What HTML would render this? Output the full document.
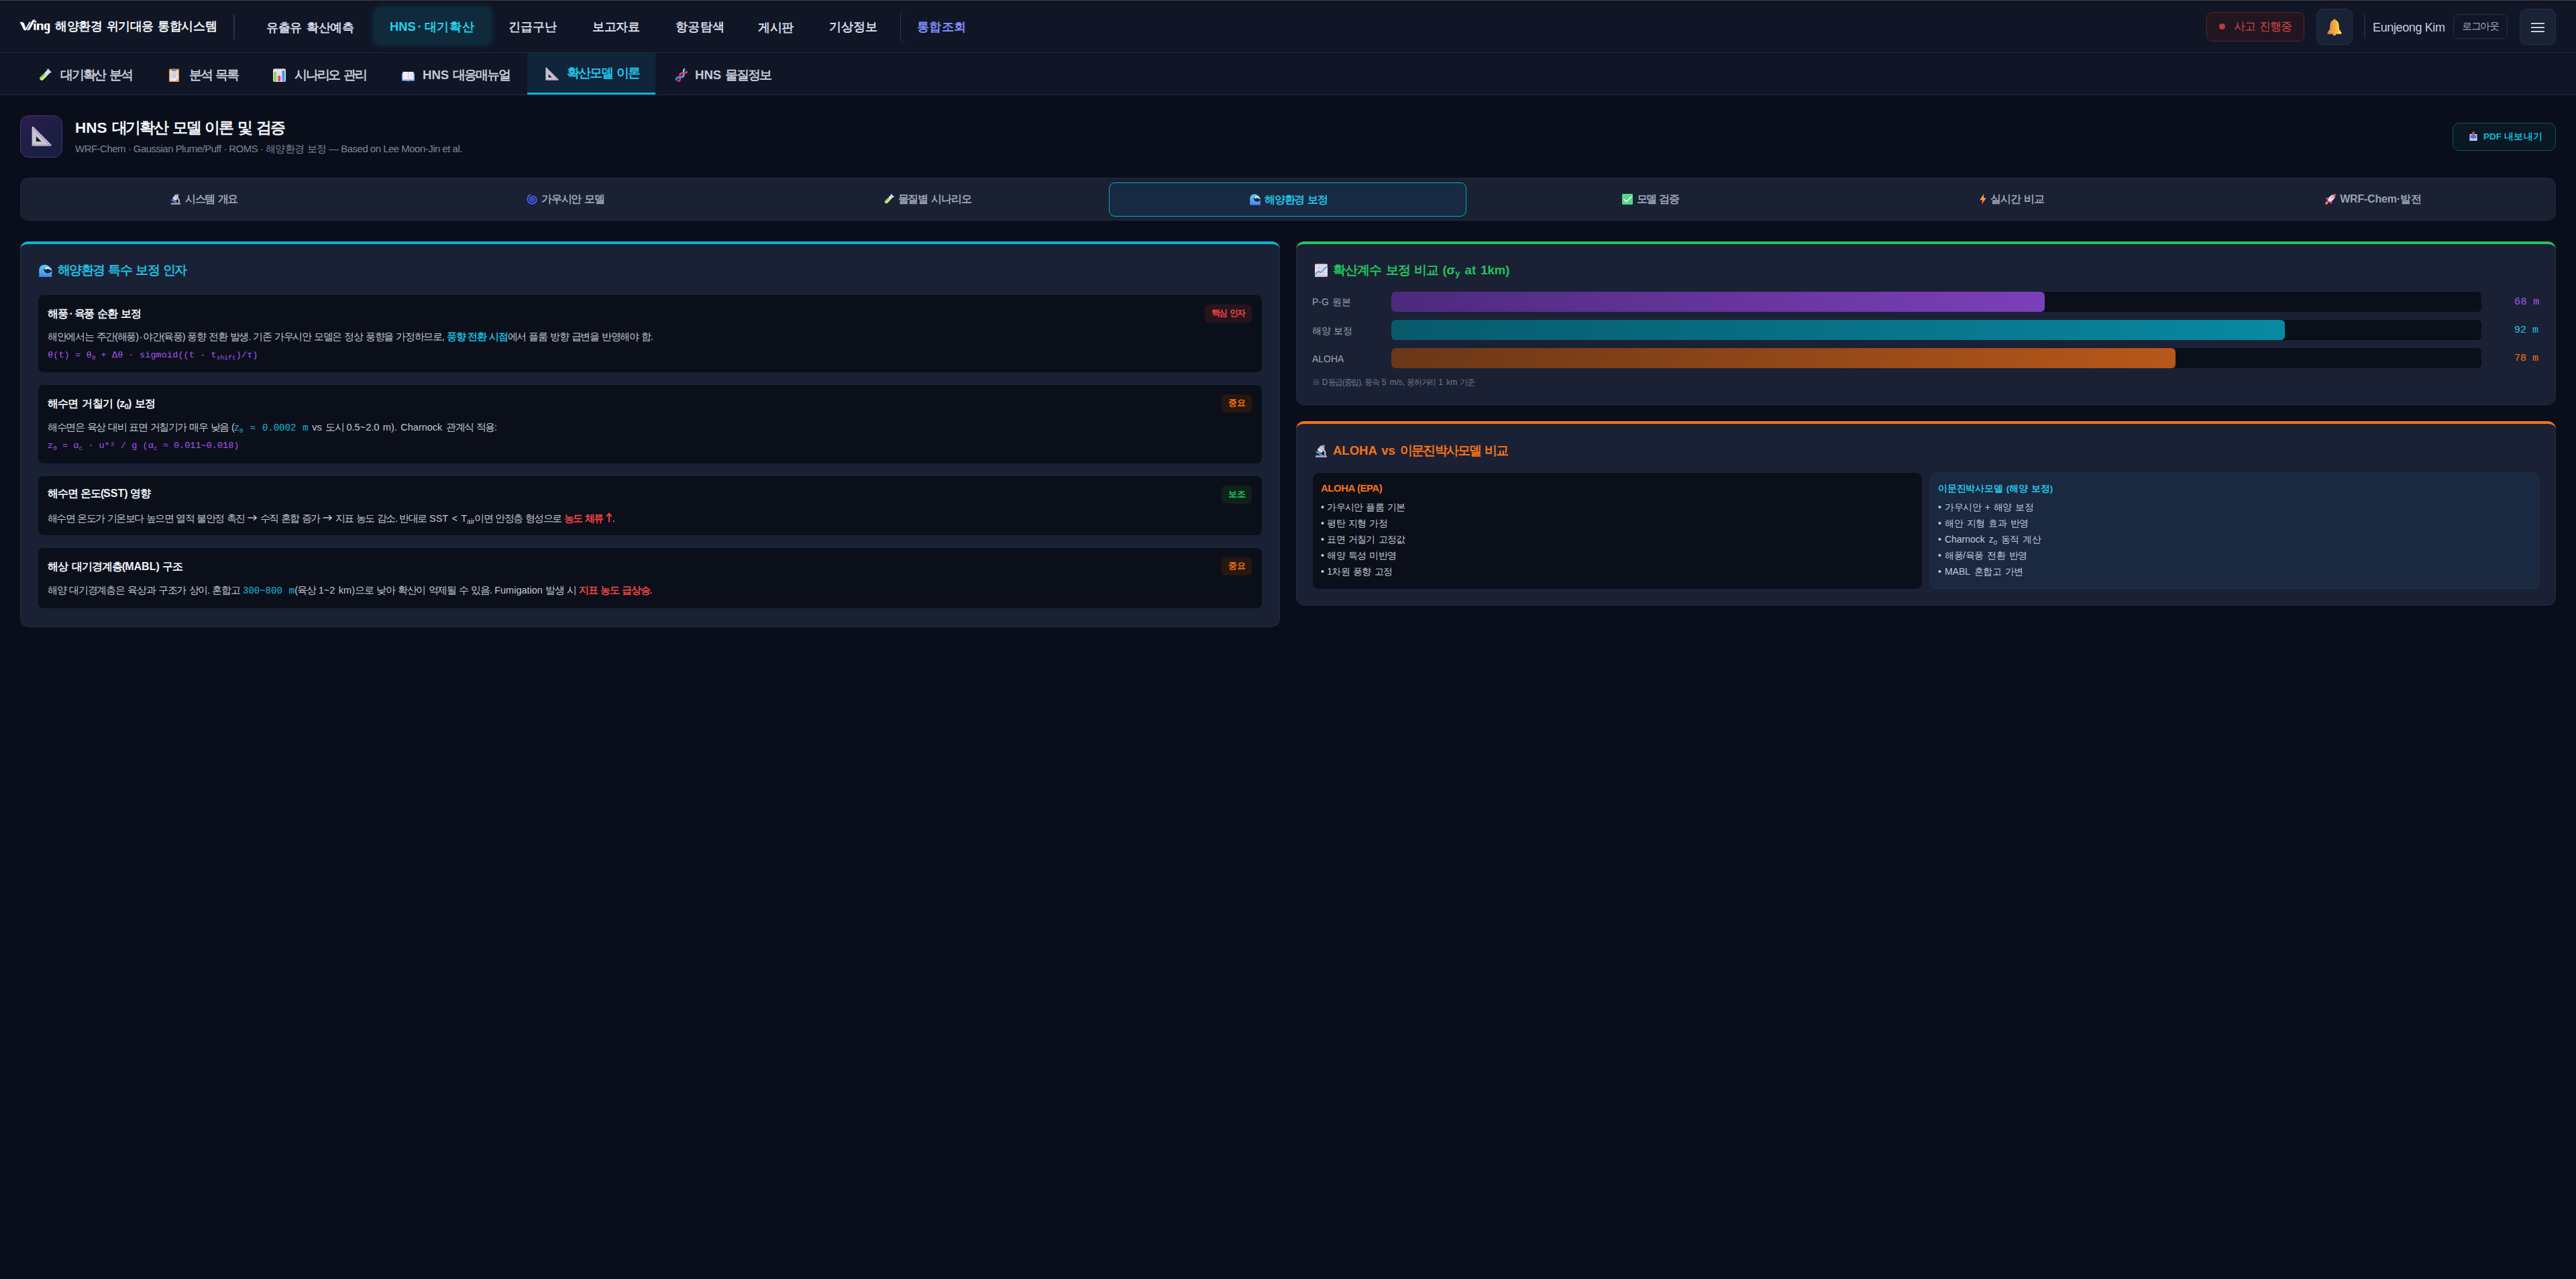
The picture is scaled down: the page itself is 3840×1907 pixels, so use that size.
<!DOCTYPE html>
<html lang="ko">
<head>
<meta charset="utf-8">
<style>
*{box-sizing:border-box;margin:0;padding:0}
html,body{width:3840px;height:1907px;overflow:hidden;background:#0a0e1a;font-family:"Liberation Sans",sans-serif;color:#c9d1e0}
.l{letter-spacing:0}
.dt{display:inline-block;margin:0 3px}
/* top nav */
#topline{position:absolute;left:0;top:0;width:3840px;height:1px;background:#42413d}
#nav{position:absolute;left:0;top:1px;width:3840px;height:78px;background:#101626;border-top:1px solid #0d1222;border-bottom:1px solid #1e2a44}
#sys{position:absolute;left:82px;top:25px;font-size:18px;font-weight:bold;color:#f2f4f8;line-height:24px;letter-spacing:-.5px;word-spacing:2px;white-space:nowrap}
#sep1{position:absolute;left:348px;top:20px;width:2px;height:37px;background:#27324d}
.ni{position:absolute;top:9px;height:55px;font-size:18.3px;font-weight:bold;color:#d3d9e6;white-space:nowrap}
.ni span{position:absolute;top:19px;line-height:24px;letter-spacing:-.3px;word-spacing:2px}
.ni.act{background:#0f2a3b;border-radius:10px;color:#22d3ee;box-shadow:0 0 8px 2px rgba(14,70,95,.45)}
.ni.int{color:#818cf8}
#intbox{position:absolute;left:1342px;top:11px;width:40px;height:53px;border-left:1.5px solid #2b3160;border-radius:9px 0 0 9px}
#inc{position:absolute;left:3289px;top:16px;width:146px;height:44px;border:1.5px solid #5a2431;background:#21161f;border-radius:9px}
#inc .dot{position:absolute;left:18px;top:16px;width:9px;height:9px;border-radius:50%;background:#b93a3f}
#inct{position:absolute;left:40px;top:9px;font-size:17px;color:#d9474d;line-height:24px;letter-spacing:-.9px;word-spacing:2px;white-space:nowrap}
.ibtn{position:absolute;top:11px;width:54px;height:54px;background:#1a2236;border:1.5px solid #243049;border-radius:10px}
#bell{left:3453px}
#sep2{position:absolute;left:3524px;top:19px;width:2px;height:36px;background:#1f2a42}
#uname{position:absolute;left:3537px;top:27px;font-size:18px;color:#c8d0e0;line-height:24px;white-space:nowrap;letter-spacing:-.3px}
#logout{position:absolute;left:3657px;top:19px;width:81px;height:37px;border:1.5px solid #243049;border-radius:8px}
#logoutt{position:absolute;left:12px;top:5px;font-size:15px;color:#a5aec0;line-height:24px;letter-spacing:-1.4px;white-space:nowrap}
#menu{left:3756px}
#menu i{position:absolute;left:16px;width:20px;height:2px;background:#c8d0e0}
/* sub nav */
#sub{position:absolute;left:0;top:79px;width:3840px;height:63px;background:#111626;border-bottom:1px solid #1e2a44}
.si{position:absolute;top:0;height:62px;font-size:18.6px;font-weight:bold;color:#c4cad8;white-space:nowrap}
.si .em{position:absolute;line-height:0}
.ic{display:block}
.si .tx{position:absolute;top:20px;line-height:24px;letter-spacing:-1.2px;word-spacing:3px}
.si.act{background:#10243a;border-bottom:3px solid #06b6d4;color:#22c4e6}
/* header */
#pgicon{position:absolute;left:30px;top:172px;width:63px;height:63px;border-radius:13px;border:1.5px solid #4a2f86;background:linear-gradient(135deg,#2c1c4c 0%,#1c1f44 55%,#13203f 100%);text-align:center;font-size:26px;line-height:61px}
#pgtitle{position:absolute;left:112px;top:176px;font-size:22.5px;font-weight:bold;color:#f3f5fa;line-height:30px;letter-spacing:-1.6px;word-spacing:3px;white-space:nowrap}
#pgsub{position:absolute;left:112px;top:212px;font-size:15px;color:#7c879f;line-height:20px;white-space:nowrap;letter-spacing:-.5px}
#pdf{position:absolute;left:3656px;top:183px;width:154px;height:42px;border:1.5px solid #0d5566;background:#0a1824;border-radius:10px;color:#13b8dc;font-size:13.5px;font-weight:bold;line-height:39px;white-space:nowrap}
#pdf .em{position:absolute;left:0;top:0}
#pdft{position:absolute;left:45px;top:0;letter-spacing:-.8px}
/* tabs */
#tabs{position:absolute;left:30px;top:265px;width:3780px;height:64px;background:#1a2133;border:1px solid #1f2940;border-radius:12px}
.tb{position:absolute;top:6px;width:533px;height:51px;border-radius:9px;padding-left:3px;font-size:16px;font-weight:bold;color:#9aa3b6;line-height:49px;text-align:center;white-space:nowrap;letter-spacing:-.6px;word-spacing:2px}
.tb .em{display:inline-block;vertical-align:-3px;margin-right:6px;letter-spacing:0;line-height:0}
.tb.act{background:#172a42;border:1.5px solid #0ea5c9;color:#22c3e6}
/* cards */
.card{position:absolute;background:#1b2134;border:1px solid #222b41;border-radius:12px}
.card .bar{position:absolute;left:-1px;right:-1px;top:-1px;height:16px;border-top:4.5px solid;border-radius:12px 12px 0 0}
.ctitle{position:absolute;font-size:18.5px;font-weight:bold;line-height:24px;white-space:nowrap;letter-spacing:-1px;word-spacing:2px}
.ctitle .l{letter-spacing:0}
.ctitle .em{display:inline-block;margin-right:8px;letter-spacing:0;vertical-align:-4px;line-height:0}
.item{position:absolute;left:25px;width:1826px;background:#0b0f1a;border:1px solid #0c2833;border-radius:9px}
.item .h{position:absolute;left:14px;font-size:16px;font-weight:bold;color:#f1f3f8;line-height:22px;white-space:nowrap;letter-spacing:-1.1px;word-spacing:2px}
.item .h .l{letter-spacing:0}
.item .d{position:absolute;left:14px;font-size:14.5px;color:#c3cad8;line-height:22px;white-space:nowrap;letter-spacing:-.9px;word-spacing:1.5px}
.item .d .l{letter-spacing:0}
.item .f{position:absolute;left:14px;font-family:"Liberation Mono",monospace;font-size:13.5px;color:#a855f7;line-height:20px;white-space:nowrap}
.item .bd{position:absolute;right:15px;top:14px;height:27px;padding:0 10px;border-radius:6px;font-size:13px;font-weight:bold;line-height:25px;letter-spacing:-.6px;word-spacing:2px}
.arw{display:inline-block;vertical-align:1px}
.ar{font-family:"Liberation Sans",sans-serif;font-weight:bold;font-size:1.15em;letter-spacing:0;line-height:0}
.mono{font-family:"Liberation Mono",monospace;letter-spacing:0}
.cy{color:#16b9dc;font-weight:bold}
.rd{color:#ef4444;font-weight:bold}
sub{font-size:70%;vertical-align:-3px;line-height:0}
.lbl{position:absolute;left:23px;font-size:14px;color:#9ca5b8;line-height:20px;white-space:nowrap;letter-spacing:-.5px;word-spacing:2px}
.track{position:absolute;left:141px;width:1625px;height:30px;background:#0b0f1a;border-radius:6px;overflow:hidden}
.fill{position:absolute;left:0;top:0;bottom:0;border-radius:6px}
.val{position:absolute;left:1815px;font-family:"Liberation Mono",monospace;font-size:15px;line-height:20px;white-space:nowrap}
.cmp{position:absolute;top:76px;height:173px;border-radius:9px}
.cmp .h{position:absolute;left:12px;top:13px;font-size:15px;font-weight:bold;line-height:20px;white-space:nowrap;letter-spacing:-.5px}
.cmp ul{position:absolute;left:12px;top:40px;list-style:none;font-size:14px;color:#c3cad8;line-height:24px;white-space:nowrap;letter-spacing:-.6px;word-spacing:2px}

/*CAL*/
#sys{letter-spacing:-0.46px!important;margin-top:0px}
#n1{letter-spacing:-0.30px!important;margin-top:-1px}
#n2{letter-spacing:0.83px!important;margin-top:-2px}
#n3{letter-spacing:0.09px!important;margin-top:-2px}
#n4{letter-spacing:-0.30px!important;margin-top:-2px}
#n5{letter-spacing:0.30px!important;margin-top:-2px}
#n6{letter-spacing:-0.30px!important;margin-top:-1px}
#n7{letter-spacing:0.00px!important;margin-top:-2px}
#n8{letter-spacing:0.30px!important;margin-top:-2px}
#inct{letter-spacing:-0.90px!important;margin-top:0px}
#uname{letter-spacing:-0.38px!important;margin-top:0px}
#logoutt{letter-spacing:-1.40px!important;margin-top:0px}
#s1{letter-spacing:-2.22px!important;margin-top:1px}
#s2{letter-spacing:-2.33px!important;margin-top:1px}
#s3{letter-spacing:-2.19px!important;margin-top:1px}
#s4{letter-spacing:-2.10px!important;margin-top:1px}
#s5{letter-spacing:-1.95px!important;margin-top:0px}
#s6{letter-spacing:-1.99px!important;margin-top:1px}
#pgtitle{letter-spacing:-2.20px!important;margin-top:0px}
#pgsub{letter-spacing:-0.52px!important;margin-top:0px}
#pdft{letter-spacing:0.32px!important;margin-top:0px}
#i1h{letter-spacing:-1.23px!important;margin-top:0px}
#i3h{letter-spacing:-1.25px!important;margin-top:-1px}
#i4h{letter-spacing:-0.95px!important;margin-top:1px}
#lb1{letter-spacing:-0.50px!important;margin-top:-1px}
#v1{letter-spacing:0.45px!important;margin-top:0px}
#fn{letter-spacing:-1.26px!important;margin-top:0px}
#ah{letter-spacing:-0.50px!important;margin-top:0px}
#al{letter-spacing:-0.76px!important;margin-top:-1px}
#bh{letter-spacing:-0.24px!important;margin-top:0px}
#t6 .l{letter-spacing:-.2px}
#t6{letter-spacing:0px!important}
#t0{letter-spacing:-1.52px!important;margin-top:0px}
#t1{letter-spacing:-1.16px!important;margin-top:0px}
#t2{letter-spacing:-1.22px!important;margin-top:0px}
#t4{letter-spacing:-1.59px!important;margin-top:0px}
#t5{letter-spacing:-0.92px!important;margin-top:0px}
#ct1{letter-spacing:-1.47px!important;margin-top:1px}
#ct2{letter-spacing:-0.91px!important;margin-top:1px}
#ct3{letter-spacing:-1.80px!important;margin-top:0px}
#i1d{letter-spacing:-1.29px!important;margin-top:-1px}
#i3d{letter-spacing:-1.51px!important;margin-top:1px}
#i4d{letter-spacing:-1.20px!important;margin-top:0px}
#t3{letter-spacing:-1.3px!important}
#i1f{letter-spacing:0.10px!important;margin-top:0px}
#i2h{letter-spacing:-0.78px!important;margin-top:0px}
#i2d{letter-spacing:-1.39px!important;margin-top:0px}
#i2f{letter-spacing:0.03px!important;margin-top:0px}
#bl{letter-spacing:-0.43px!important;margin-top:-2px}
/*ENDCAL*/
</style>
</head>
<body>
<svg width="0" height="0" style="position:absolute;left:0;top:0"><defs>
<linearGradient id="gBell" x1="0" y1="0" x2="1" y2="0"><stop offset="0" stop-color="#e0803e"/><stop offset=".45" stop-color="#f0a43a"/><stop offset="1" stop-color="#ffe85e"/></linearGradient>
<linearGradient id="gLiq" x1="0" y1="0" x2="1" y2="0"><stop offset="0" stop-color="#86d43a"/><stop offset="1" stop-color="#ecf78e"/></linearGradient>
<linearGradient id="gWave" x1="0" y1="0" x2="0" y2="1"><stop offset="0" stop-color="#5ccaf8"/><stop offset="1" stop-color="#3f86f0"/></linearGradient>
<linearGradient id="gBolt" x1="0" y1="0" x2="0" y2="1"><stop offset="0" stop-color="#ffc04a"/><stop offset=".6" stop-color="#ff8a48"/><stop offset="1" stop-color="#ff4f58"/></linearGradient>
<linearGradient id="gIcon" x1="0" y1="0" x2="1" y2="1"><stop offset="0" stop-color="#2d1a4d"/><stop offset=".55" stop-color="#1e1f46"/><stop offset="1" stop-color="#13213f"/></linearGradient>
<linearGradient id="gDnaB" x1="0" y1="1" x2="1" y2="0"><stop offset="0" stop-color="#3a8cf6"/><stop offset="1" stop-color="#62e6fa"/></linearGradient>
</defs></svg>
<div id="topline"></div>
<div id="nav">
  <svg width="50" height="28" viewBox="0 0 50 28" style="position:absolute;left:26px;top:22px"><g fill="#fff">
<path d="M3.6 8.9Q7.4 8 9.8 10.2L12.6 18.8 10.6 21.2Q9.8 21.2 9.4 20.2Z"/>
<path d="M10.6 21.2L12.8 21.2 19.9 8.8 17.9 8.5Z"/>
<path d="M13.9 21.2Q17.2 21.3 18.8 19.6L26.4 5.6Q24.2 4.6 22.3 6.3Z"/>
<path d="M24.4 11H27.6V20.8H24.4Z"/><circle cx="26.8" cy="8.3" r="1.5"/>
<path d="M29.1 11H32.3V12.3Q33.4 11 35.6 11Q38.7 11.2 38.7 14.2V20.8H35.5V14.5Q35.5 12.8 34.2 12.8Q32.8 12.9 32.3 13.8V20.8H29.1Z"/>
<path fill-rule="evenodd" d="M39.9 14.2Q39.9 11 43 11H48.3V22.4Q48.3 26.2 44.6 26.2Q41.6 26.2 40.4 24.2L43.4 23.2Q43.9 24.5 44.9 24.4Q45.2 24.3 45.2 23.2V20.6H43Q39.9 20.6 39.9 17.6ZM43.2 12.6V19H45.2V12.6Z"/>
</g></svg>
  <div id="sys">해양환경 위기대응 통합시스템</div>
  <div id="sep1"></div>
  <div class="ni" style="left:371px;width:185px"><span id="n1" style="left:26px">유출유 확산예측</span></div>
  <div class="ni act" style="left:557px;width:175px"><span id="n2" style="left:24px"><b class="l">HNS</b><b class="dt">·</b>대기확산</span></div>
  <div class="ni" style="left:732px;width:125px"><span id="n3" style="left:26px">긴급구난</span></div>
  <div class="ni" style="left:857px;width:124px"><span id="n4" style="left:26px">보고자료</span></div>
  <div class="ni" style="left:981px;width:124px"><span id="n5" style="left:26px">항공탐색</span></div>
  <div class="ni" style="left:1105px;width:104px"><span id="n6" style="left:25px">게시판</span></div>
  <div class="ni" style="left:1209px;width:125px"><span id="n7" style="left:27px">기상정보</span></div>
  <div id="intbox"></div>
  <div class="ni int" style="left:1342px;width:122px"><span id="n8" style="left:25px">통합조회</span></div>

  <div id="inc"><div class="dot"></div><div id="inct">사고 진행중</div></div>
  <div class="ibtn" id="bell"><svg class="ic" width="22" height="25" viewBox="0 0 22 25" style="position:absolute;left:14.5px;top:13.5px"><circle cx="11" cy="1.6" r="1.4" fill="#f1a23e"/>
<path d="M11 1.8C7.2 1.8 4.7 4.8 4.4 9.2L4 15.6 0.6 20.6C0.1 21.5 0.6 22.7 1.8 22.7H20.2C21.4 22.7 21.9 21.5 21.4 20.6L18 15.6 17.6 9.2C17.3 4.8 14.8 1.8 11 1.8Z" fill="url(#gBell)"/>
<path d="M2.2 18.6H19.8" stroke="#f6b840" stroke-width="1" opacity=".6"/>
<ellipse cx="11" cy="23.4" rx="2.4" ry="1.5" fill="#f5a070"/></svg></div>
  <div id="sep2"></div>
  <div id="uname">Eunjeong Kim</div>
  <div id="logout"><div id="logoutt">로그아웃</div></div>
  <div class="ibtn" id="menu"><i style="top:20px"></i><i style="top:26px"></i><i style="top:32px"></i></div>
</div>

<div id="sub">
  <div class="si" style="left:30px;width:194px"><span class="em" style="left:27.4px;top:23.4px"><svg class="ic" width="20" height="20" viewBox="0 0 20 20"><g transform="scale(1.0)"><g transform="translate(10 10) scale(.86) rotate(45) translate(-10 -9)">
<rect x="6.6" y="-2.2" width="6.8" height="22.5" rx="3.4" fill="#c6e8fa"/>
<path d="M6.6 7.2H13.4V16.9A3.4 3.4 0 0 1 6.6 16.9Z" fill="url(#gLiq)"/>
<path d="M5.2 -2.8H14.8L13.4 0.6H6.6Z" fill="#b5def7"/>
<path d="M6.6 8.2h2.2M6.6 11.4h2.2M6.6 14.6h2.2" stroke="#1c8a90" stroke-width="1.1"/>
</g></g></svg></span><span class="tx" id="s1" style="left:60px">대기확산 분석</span></div>
  <div class="si" style="left:224px;width:158px"><span class="em" style="left:27.8px;top:23px"><svg class="ic" width="15" height="20" viewBox="0 0 15 20"><rect x="0" y="0.8" width="15" height="19.2" rx="1" fill="#e6a25e"/>
<path d="M1.6 3.2H13.4V15.6L10.8 18.4H1.6Z" fill="#ebe7f1"/>
<path d="M13.4 15.6L10.8 18.4V15.6Z" fill="#cfc9d8"/>
<rect x="4.2" y="1.2" width="6.6" height="3" rx="0.8" fill="#8d8896"/>
<rect x="6.3" y="0" width="2.4" height="1.6" rx="0.8" fill="#8d8896"/>
<path d="M3.6 6.8H11.4M3.6 9H11.4M3.6 11.2H11.4M3.6 13.4H10" stroke="#aeaab6" stroke-width="0.9"/></svg></span><span class="tx" id="s2" style="left:58px">분석 목록</span></div>
  <div class="si" style="left:382px;width:191px"><span class="em" style="left:25px;top:22.8px"><svg class="ic" width="19" height="20" viewBox="0 0 19 20"><rect x="0" y="0.5" width="19" height="19.5" rx="2.2" fill="#e6e2ec"/>
<path d="M0.5 7.5H18.5M0.5 13.5H18.5M6.3 0.5V19.5M12.7 0.5V19.5" stroke="#d2cdda" stroke-width="0.8"/>
<rect x="1.2" y="5.3" width="3.8" height="14" rx="1" fill="#8ad64e"/>
<rect x="7.4" y="10.6" width="3.8" height="8.7" rx="1.6" fill="#ee3a74"/>
<rect x="13.6" y="3.2" width="3.8" height="16.1" rx="1" fill="#3a96f2"/></svg></span><span class="tx" id="s3" style="left:57px">시나리오 관리</span></div>
  <div class="si" style="left:573px;width:213px"><span class="em" style="left:26px;top:27.8px"><svg class="ic" width="19" height="15" viewBox="0 0 19 15"><path d="M0 2.2H19V14H10.6L9.5 15.2 8.4 14H0Z" fill="#4ab6f6"/>
<path d="M0 12.6H19V14H10.6L9.5 15.2 8.4 14H0Z" fill="#3a62d0"/>
<path d="M1.4 0.6C1.4 0.3 1.6 0 2 0H9.3V13.2L8.3 12.4H1.4Z" fill="#f0ebf7"/>
<path d="M17.6 0.6C17.6 0.3 17.4 0 17 0H9.7V13.2L10.7 12.4H17.6Z" fill="#ece6f4"/>
<path d="M1.4 11H9.3V13.2L8.3 12.4H1.4Z M17.6 11H9.7V13.2L10.7 12.4H17.6Z" fill="#c9b8dc"/>
<path d="M9.5 0.4V13.4" stroke="#cdc5dc" stroke-width="0.8"/></svg></span><span class="tx" id="s4" style="left:57px"><b class="l">HNS</b> 대응매뉴얼</span></div>
  <div class="si act" style="left:786px;width:191px"><span class="em" style="left:27px;top:20.8px"><svg class="ic" width="20" height="20" viewBox="0 0 20 20"><g transform="scale(1.0)">
<path d="M1.6 0.4L19.4 18.2Q20 19.6 18.6 19.6H1.4Q0.4 19.6 0.4 18.6V1.4Q0.6 0 1.6 0.4Z" fill="#c9c5cf"/>
<path d="M0.4 18H19.2L19.6 19.2Q19.6 19.6 18.6 19.6H1.4Q0.4 19.6 0.4 18.6Z" fill="#b9aec8"/>
<path d="M4.6 10.2V15.4H9.8Z" fill="#0f1e33"/>
<circle cx="2.60" cy="3.40" r="0.75" fill="#a86ff5"/><circle cx="4.45" cy="5.25" r="0.75" fill="#a86ff5"/><circle cx="6.30" cy="7.10" r="0.75" fill="#a86ff5"/><circle cx="8.15" cy="8.95" r="0.75" fill="#a86ff5"/><circle cx="10.00" cy="10.80" r="0.75" fill="#a86ff5"/><circle cx="11.85" cy="12.65" r="0.75" fill="#a86ff5"/><circle cx="13.70" cy="14.50" r="0.75" fill="#a86ff5"/><circle cx="15.55" cy="16.35" r="0.75" fill="#a86ff5"/><circle cx="17.40" cy="18.20" r="0.75" fill="#a86ff5"/></g></svg></span><span class="tx" id="s5" style="left:59px;top:18px">확산모델 이론</span></div>
  <div class="si" style="left:977px;width:200px"><span class="em" style="left:28px;top:23px"><svg class="ic" width="20" height="20" viewBox="0 0 20 20"><path d="M6.86 19.03 L3.00 15.68 M8.29 18.05 L3.77 14.13 M8.86 16.32 L5.41 13.32 M8.77 14.02 L7.70 13.09 M8.47 11.54 L10.20 13.04 M8.50 9.35 L12.36 12.70 M9.27 7.79 L13.79 11.72 M10.91 6.99 L14.36 9.99 M13.20 6.76 L14.27 7.69 M15.70 6.70 L13.97 5.21 M17.86 6.36 L14.00 3.01 M19.29 5.38 L14.77 1.46 " stroke="#8a5aa8" stroke-width="0.8"/>
<path d="M2.92 17.09 L2.93 16.35 L3.00 15.68 L3.17 15.08 L3.42 14.56 L3.77 14.13 L4.23 13.78 L4.77 13.51 L5.41 13.32 L6.12 13.20 L6.89 13.13 L7.70 13.09 L8.54 13.08 L9.37 13.07 L10.20 13.04 L10.98 12.98 L11.71 12.87 L12.36 12.70 L12.93 12.45 L13.41 12.13 L13.79 11.72 L14.07 11.22 L14.26 10.64 L14.36 9.99 L14.38 9.27 L14.35 8.50 L14.27 7.69 L14.16 6.86 L14.06 6.02 L13.97 5.21 L13.92 4.42 L13.93 3.69 L14.00 3.01 L14.17 2.41 L14.42 1.89 L14.77 1.46 L15.23 1.11" stroke="url(#gDnaB)" stroke-width="2.2" fill="none" stroke-linecap="round" stroke-linejoin="round"/>
<path d="M5.48 19.31 L6.21 19.20 L6.86 19.03 L7.43 18.79 L7.91 18.46 L8.29 18.05 L8.57 17.55 L8.76 16.98 L8.86 16.32 L8.88 15.60 L8.85 14.83 L8.77 14.02 L8.66 13.19 L8.56 12.36 L8.47 11.54 L8.42 10.76 L8.43 10.02 L8.50 9.35 L8.67 8.75 L8.92 8.23 L9.27 7.79 L9.73 7.45 L10.27 7.18 L10.91 6.99 L11.62 6.87 L12.39 6.79 L13.20 6.76 L14.04 6.74 L14.87 6.73 L15.70 6.70 L16.48 6.64 L17.21 6.54 L17.86 6.36 L18.43 6.12 L18.91 5.79 L19.29 5.38 L19.57 4.89" stroke="#f03a70" stroke-width="2.2" fill="none" stroke-linecap="round" stroke-linejoin="round"/></svg></span><span class="tx" id="s6" style="left:59px"><b class="l">HNS</b> 물질정보</span></div>
</div>

<div id="pgicon"><svg class="ic" width="30" height="30" viewBox="0 0 30 30" style="position:absolute;left:15.5px;top:14.5px"><g transform="scale(1.5)">
<path d="M1.6 0.4L19.4 18.2Q20 19.6 18.6 19.6H1.4Q0.4 19.6 0.4 18.6V1.4Q0.6 0 1.6 0.4Z" fill="#c9c5cf"/>
<path d="M0.4 18H19.2L19.6 19.2Q19.6 19.6 18.6 19.6H1.4Q0.4 19.6 0.4 18.6Z" fill="#b9aec8"/>
<path d="M4.6 10.2V15.4H9.8Z" fill="#0f1e33"/>
<circle cx="2.60" cy="3.40" r="0.75" fill="#a86ff5"/><circle cx="4.45" cy="5.25" r="0.75" fill="#a86ff5"/><circle cx="6.30" cy="7.10" r="0.75" fill="#a86ff5"/><circle cx="8.15" cy="8.95" r="0.75" fill="#a86ff5"/><circle cx="10.00" cy="10.80" r="0.75" fill="#a86ff5"/><circle cx="11.85" cy="12.65" r="0.75" fill="#a86ff5"/><circle cx="13.70" cy="14.50" r="0.75" fill="#a86ff5"/><circle cx="15.55" cy="16.35" r="0.75" fill="#a86ff5"/><circle cx="17.40" cy="18.20" r="0.75" fill="#a86ff5"/></g></svg></div>
<div id="pgtitle"><span class="l">HNS</span> 대기확산 모델 이론 및 검증</div>
<div id="pgsub">WRF-Chem · Gaussian Plume/Puff · ROMS · 해양환경 보정 — Based on Lee Moon-Jin et al.</div>
<div id="pdf"><span class="em"><svg class="ic" width="12" height="15" viewBox="0 0 12 15" style="position:absolute;left:24.3px;top:11.4px"><path d="M0.5 5H11.5V14.4Q11.5 15 10.9 15H1.1Q0.5 15 0.5 14.4Z" fill="#e8e2f0"/>
<path d="M1.6 6.2H10.4V11.2H7.4L6 12.8 4.6 11.2H1.6Z" fill="#2a86e0"/>
<path d="M0.5 12.6H11.5V14.4Q11.5 15 10.9 15H1.1Q0.5 15 0.5 14.4Z" fill="#c3b0dc"/>
<path d="M6 0.4L9.2 3.8H7.3V8H4.7V3.8H2.8Z" fill="#e8306a"/></svg></span><span id="pdft"><span class="l">PDF</span> 내보내기</span></div>

<div id="tabs">
  <div class="tb" id="t0" style="left:5px"><span class="em"><svg class="ic" width="16" height="16" viewBox="0 0 16 16"><rect x="0.8" y="13.4" width="14.4" height="2.6" rx="0.8" fill="#ad9bbd"/>
<path d="M9.6 6.4C12.8 7 14 10.2 12.4 13.2" stroke="#cdc3d8" stroke-width="1.9" fill="none"/>
<g transform="rotate(38 8 5.6)"><rect x="4.6" y="1.2" width="6.6" height="9" rx="3" fill="#c6c2cc"/><rect x="4.6" y="6.8" width="6.6" height="2" fill="#e8d6fa"/><rect x="6.2" y="-0.6" width="3.4" height="2.4" rx="0.6" fill="#8e8a98"/></g>
<path d="M2.2 9L8.8 13" stroke="#3ca6f2" stroke-width="2" stroke-linecap="round"/></svg></span>시스템 개요</div>
  <div class="tb" id="t1" style="left:544px"><span class="em"><svg class="ic" width="16" height="16" viewBox="0 0 16 16"><path d="M5 1.4C2.6 3 1.2 5.8 1.6 9 2.2 13 6 15.4 9.6 14.8 13 14.2 15 11.2 14.6 8.2 14.2 5.2 11.6 3.4 9 3.6 6.6 3.8 5 5.8 5.2 8.2 5.4 10.2 7 11.6 8.8 11.4 10.4 11.2 11.4 9.8 11.2 8.4 11 7.2 10 6.6 9 6.8 8.2 7 7.8 7.8 8 8.4" stroke="#4d5ffb" stroke-width="1.9" fill="none" stroke-linecap="round"/></svg></span>가우시안 모델</div>
  <div class="tb" id="t2" style="left:1083px"><span class="em"><svg class="ic" width="16" height="16" viewBox="0 0 16 16"><g transform="scale(0.8)"><g transform="translate(10 10) scale(.86) rotate(45) translate(-10 -9)">
<rect x="6.6" y="-2.2" width="6.8" height="22.5" rx="3.4" fill="#c6e8fa"/>
<path d="M6.6 7.2H13.4V16.9A3.4 3.4 0 0 1 6.6 16.9Z" fill="url(#gLiq)"/>
<path d="M5.2 -2.8H14.8L13.4 0.6H6.6Z" fill="#b5def7"/>
<path d="M6.6 8.2h2.2M6.6 11.4h2.2M6.6 14.6h2.2" stroke="#1c8a90" stroke-width="1.1"/>
</g></g></svg></span>물질별 시나리오</div>
  <div class="tb act" id="t3" style="left:1622px"><span class="em"><svg class="ic" width="16" height="17" viewBox="0 0 16 17"><g transform="scale(1.0 1.0)">
<path d="M0.2 17V7.6C0.2 3.4 3.2 0.6 7 0.6 9.8 0.6 12.2 2 13.4 3.6L15.8 6.8V17Z" fill="url(#gWave)"/>
<path d="M15.8 9.8C14.6 11.6 12.8 12.6 10.8 12.6 7.8 12.6 5.6 10.4 5.6 7.8 5.6 5.6 7.2 4.2 9 4.2 10.4 4.2 11.8 5 12.4 6 13.4 6.4 14.6 7.8 15.8 9Z" fill="#1a2a44"/>
<path d="M6.6 5.6C7.6 3.6 10.2 3.2 12 3.8L14.2 5 15.6 6.6 14.6 7.4 13.2 6.6 11.4 6.2 9 6.4 7.4 7Z" fill="#bfeefc"/>
<path d="M5.6 7.8C5.6 10.4 7.8 12.6 10.8 12.6 12.8 12.6 14.6 11.6 15.8 9.8" stroke="#6ad6fa" stroke-width="1" fill="none"/>
<path d="M0.2 16H15.8V17H0.2Z" fill="#3a6fd8"/></g></svg></span>해양환경 보정</div>
  <div class="tb" id="t4" style="left:2161px"><span class="em"><svg class="ic" width="16" height="16" viewBox="0 0 16 16"><rect x="0" y="0" width="16" height="16" rx="1.6" fill="#58d68b"/>
<path d="M3 8.4L6.5 11.6 13.8 4.6" stroke="#fdf3ff" stroke-width="1.6" fill="none" stroke-linecap="round" stroke-linejoin="round"/></svg></span>모델 검증</div>
  <div class="tb" id="t5" style="left:2700px"><span class="em"><svg class="ic" width="10" height="16" viewBox="0 0 10 16"><path d="M6.2 0.2L0.2 9.2H4L3.2 15.8 9.8 6.2H6Z" fill="url(#gBolt)"/></svg></span>실시간 비교</div>
  <div class="tb" id="t6" style="left:3239px"><span class="em"><svg class="ic" width="16" height="16" viewBox="0 0 16 16"><path d="M15.8 0.2C12.6 0.2 8.8 1.8 5.8 5.2L3.6 9.4 6.6 12.4 10.8 10.2C14.2 7.2 15.8 3.4 15.8 0.2Z" fill="#ecdcef"/>
<path d="M15.8 0.2C13.4 0.2 11.6 0.8 10.8 1.4L14.6 5.2C15.2 4.4 15.8 2.6 15.8 0.2Z" fill="#ef3458"/>
<circle cx="10.6" cy="5.4" r="1.7" fill="#5aaef8" stroke="#d7c8de" stroke-width="0.6"/>
<path d="M5.8 5.2L0.4 6.6 3.6 9.4Z M10.8 10.2L9.4 15.6 6.6 12.4Z" fill="#ee3a86"/>
<path d="M3.6 9.4L6.6 12.4 5 13.4 2.6 11Z" fill="#e8306a"/>
<path d="M2.6 11.2C1.2 11.4 0.2 13.2 0.2 15.8 2.8 15.8 4.6 14.8 4.8 13.4Z" fill="#f5952e"/></svg></span><span class="l">WRF-Chem·</span>발전</div>
</div>

<!-- left card -->
<div class="card" style="left:30px;top:360px;width:1878px;height:575px">
  <div class="bar" style="border-color:#06b6d4"></div>
  <div class="ctitle" id="ct1" style="left:27px;top:29px;color:#1fbfe0"><span class="em"><svg class="ic" width="19.5" height="19.5" viewBox="0 0 19.5 19.5"><g transform="scale(1.21875 1.1470588235294117)">
<path d="M0.2 17V7.6C0.2 3.4 3.2 0.6 7 0.6 9.8 0.6 12.2 2 13.4 3.6L15.8 6.8V17Z" fill="url(#gWave)"/>
<path d="M15.8 9.8C14.6 11.6 12.8 12.6 10.8 12.6 7.8 12.6 5.6 10.4 5.6 7.8 5.6 5.6 7.2 4.2 9 4.2 10.4 4.2 11.8 5 12.4 6 13.4 6.4 14.6 7.8 15.8 9Z" fill="#1a2a44"/>
<path d="M6.6 5.6C7.6 3.6 10.2 3.2 12 3.8L14.2 5 15.6 6.6 14.6 7.4 13.2 6.6 11.4 6.2 9 6.4 7.4 7Z" fill="#bfeefc"/>
<path d="M5.6 7.8C5.6 10.4 7.8 12.6 10.8 12.6 12.8 12.6 14.6 11.6 15.8 9.8" stroke="#6ad6fa" stroke-width="1" fill="none"/>
<path d="M0.2 16H15.8V17H0.2Z" fill="#3a6fd8"/></g></svg></span>해양환경 특수 보정 인자</div>

  <div class="item" style="top:78px;height:117px">
    <div class="h" id="i1h" style="top:17px">해풍<b class="dt">·</b>육풍 순환 보정</div>
    <div class="bd" style="color:#ef4444;background:#27141d;letter-spacing:-1.5px">핵심 인자</div>
    <div class="d" id="i1d" style="top:52px">해안에서는 주간(해풍)<b class="dt" style="font-weight:normal;margin:0 2px">·</b>야간(육풍) 풍향 전환 발생. 기존 가우시안 모델은 정상 풍향을 가정하므로, <span class="cy">풍향 전환 시점</span>에서 플룸 방향 급변을 반영해야 함.</div>
    <div class="f" id="i1f" style="top:80px">θ(t) = θ<sub>0</sub> + Δθ · sigmoid((t - t<sub>shift</sub>)/τ)</div>
  </div>

  <div class="item" style="top:212px;height:119px">
    <div class="h" id="i2h" style="top:17px">해수면 거칠기 (z<sub>0</sub>) 보정</div>
    <div class="bd" style="color:#f97316;background:#26170f">중요</div>
    <div class="d" id="i2d" style="top:52px">해수면은 육상 대비 표면 거칠기가 매우 낮음 (<span class="mono" style="color:#16b9dc;font-size:14px">z<sub>0</sub> ≈ 0.0002 m</span><span class="l"> vs </span>도시 <span class="l">0.5~2.0 m). Charnock </span>관계식 적용:</div>
    <div class="f" id="i2f" style="top:81px">z<sub>0</sub> = α<sub>c</sub> · u*² / g (α<sub>c</sub> ≈ 0.011~0.018)</div>
  </div>

  <div class="item" style="top:348px;height:90px">
    <div class="h" id="i3h" style="top:16px">해수면 온도(<span class="l">SST</span>) 영향</div>
    <div class="bd" style="color:#22c55e;background:#0f2219">보조</div>
    <div class="d" id="i3d" style="top:51px">해수면 온도가 기온보다 높으면 열적 불안정 촉진 <svg class="arw" width="15" height="10" viewBox="0 0 15 10"><path d="M0.5 5H13M9 1.2L13.2 5 9 8.8" stroke="currentColor" stroke-width="1.5" fill="none"/></svg> 수직 혼합 증가 <svg class="arw" width="15" height="10" viewBox="0 0 15 10"><path d="M0.5 5H13M9 1.2L13.2 5 9 8.8" stroke="currentColor" stroke-width="1.5" fill="none"/></svg> 지표 농도 감소. 반대로 <span class="l">SST &lt; T<sub>air</sub></span>이면 안정층 형성으로 <span class="rd">농도 체류 <svg class="arw" width="10" height="15" viewBox="0 0 10 15" style="vertical-align:-1px"><path d="M5 14.5V2M1.2 6L5 1.8 8.8 6" stroke="currentColor" stroke-width="2" fill="none"/></svg></span>.</div>
  </div>

  <div class="item" style="top:455px;height:92px">
    <div class="h" id="i4h" style="top:16px">해상 대기경계층(<span class="l">MABL</span>) 구조</div>
    <div class="bd" style="color:#f97316;background:#26170f">중요</div>
    <div class="d" id="i4d" style="top:52px">해양 대기경계층은 육상과 구조가 상이. 혼합고 <span class="mono" style="color:#16b9dc;font-size:14px">300~800 m</span>(육상 <span class="l">1~2 km)</span>으로 낮아 확산이 억제될 수 있음. <span class="l">Fumigation</span> 발생 시 <span class="rd">지표 농도 급상승</span>.</div>
  </div>
</div>

<!-- right card 1 -->
<div class="card" style="left:1932px;top:360px;width:1878px;height:244px">
  <div class="bar" style="border-color:#22c55e"></div>
  <div class="ctitle" id="ct2" style="left:27px;top:29px;color:#22c55e"><span class="em"><svg class="ic" width="19" height="20" viewBox="0 0 19 20"><rect x="0" y="0.4" width="19" height="19.4" rx="1.8" fill="#e2dcea"/>
<path d="M0.4 6.6H18.6M0.4 13.6H18.6M6.3 0.6V19.6M12.7 0.6V19.6" stroke="#cec7d6" stroke-width="0.8"/>
<rect x="0" y="17.6" width="19" height="2.2" rx="1" fill="#d0b8e0"/>
<path d="M0.2 16.4L5.6 11.4 8.6 13.4 18.8 3.6" stroke="#3b9ae8" stroke-width="1.6" fill="none" stroke-linejoin="round"/></svg></span>확산계수 보정 비교 <span class="l">(σ<sub>y</sub> at 1km)</span></div>
  <div class="lbl" id="lb1" style="top:80px"><span class="l">P-G</span> 원본</div>
  <div class="track" style="top:74px"><div class="fill" style="width:974px;background:linear-gradient(90deg,#4d2a7d,#7c3fba)"></div></div>
  <div class="val" id="v1" style="top:80px;color:#a855f7">68 m</div>
  <div class="lbl" id="lb2" style="top:122px">해양 보정</div>
  <div class="track" style="top:116px"><div class="fill" style="width:1332px;background:linear-gradient(90deg,#075a6c,#0889a3)"></div></div>
  <div class="val" id="v2" style="top:122px;color:#22c3e6">92 m</div>
  <div class="lbl" id="lb3" style="top:164px"><span class="l">ALOHA</span></div>
  <div class="track" style="top:158px"><div class="fill" style="width:1169px;background:linear-gradient(90deg,#6a3717,#b8571a)"></div></div>
  <div class="val" id="v3" style="top:164px;color:#f97316">78 m</div>
  <div class="lbl" id="fn" style="top:199px;font-size:12px;color:#6f7a90">※ <span class="l">D</span>등급(중립), 풍속 <span class="l">5 m/s</span>, 풍하거리 <span class="l">1 km</span> 기준</div>
</div>

<!-- right card 2 -->
<div class="card" style="left:1932px;top:628px;width:1878px;height:275px">
  <div class="bar" style="border-color:#f97316"></div>
  <div class="ctitle" id="ct3" style="left:27px;top:31px;color:#f97316"><span class="em"><svg class="ic" width="19" height="19" viewBox="0 0 19 19"><g transform="scale(1.1875)"><rect x="0.8" y="13.4" width="14.4" height="2.6" rx="0.8" fill="#ad9bbd"/>
<path d="M9.6 6.4C12.8 7 14 10.2 12.4 13.2" stroke="#cdc3d8" stroke-width="1.9" fill="none"/>
<g transform="rotate(38 8 5.6)"><rect x="4.6" y="1.2" width="6.6" height="9" rx="3" fill="#c6c2cc"/><rect x="4.6" y="6.8" width="6.6" height="2" fill="#e8d6fa"/><rect x="6.2" y="-0.6" width="3.4" height="2.4" rx="0.6" fill="#8e8a98"/></g>
<path d="M2.2 9L8.8 13" stroke="#3ca6f2" stroke-width="2" stroke-linecap="round"/></g></svg></span><span class="l">ALOHA vs </span>이문진박사모델 비교</div>
  <div class="cmp" style="left:24px;width:908px;background:#0b0f1a">
    <div class="h" id="ah" style="color:#f97316">ALOHA (EPA)</div>
    <ul id="al"><li>• 가우시안 플룸 기본</li><li>• 평탄 지형 가정</li><li>• 표면 거칠기 고정값</li><li>• 해양 특성 미반영</li><li>• 1차원 풍향 고정</li></ul>
  </div>
  <div class="cmp" style="left:944px;width:908px;background:#1a2840;border:1px solid #15394c">
    <div class="h" id="bh" style="left:11px;color:#22c3e6;font-size:13.5px;letter-spacing:-.3px;word-spacing:2px">이문진박사모델 (해양 보정)</div>
    <ul id="bl" style="left:11px"><li>• 가우시안 + 해양 보정</li><li>• 해안 지형 효과 반영</li><li>• <span class="l">Charnock z<sub>0</sub></span> 동적 계산</li><li>• 해풍/육풍 전환 반영</li><li>• <span class="l">MABL</span> 혼합고 가변</li></ul>
  </div>
</div>
</body>
</html>
